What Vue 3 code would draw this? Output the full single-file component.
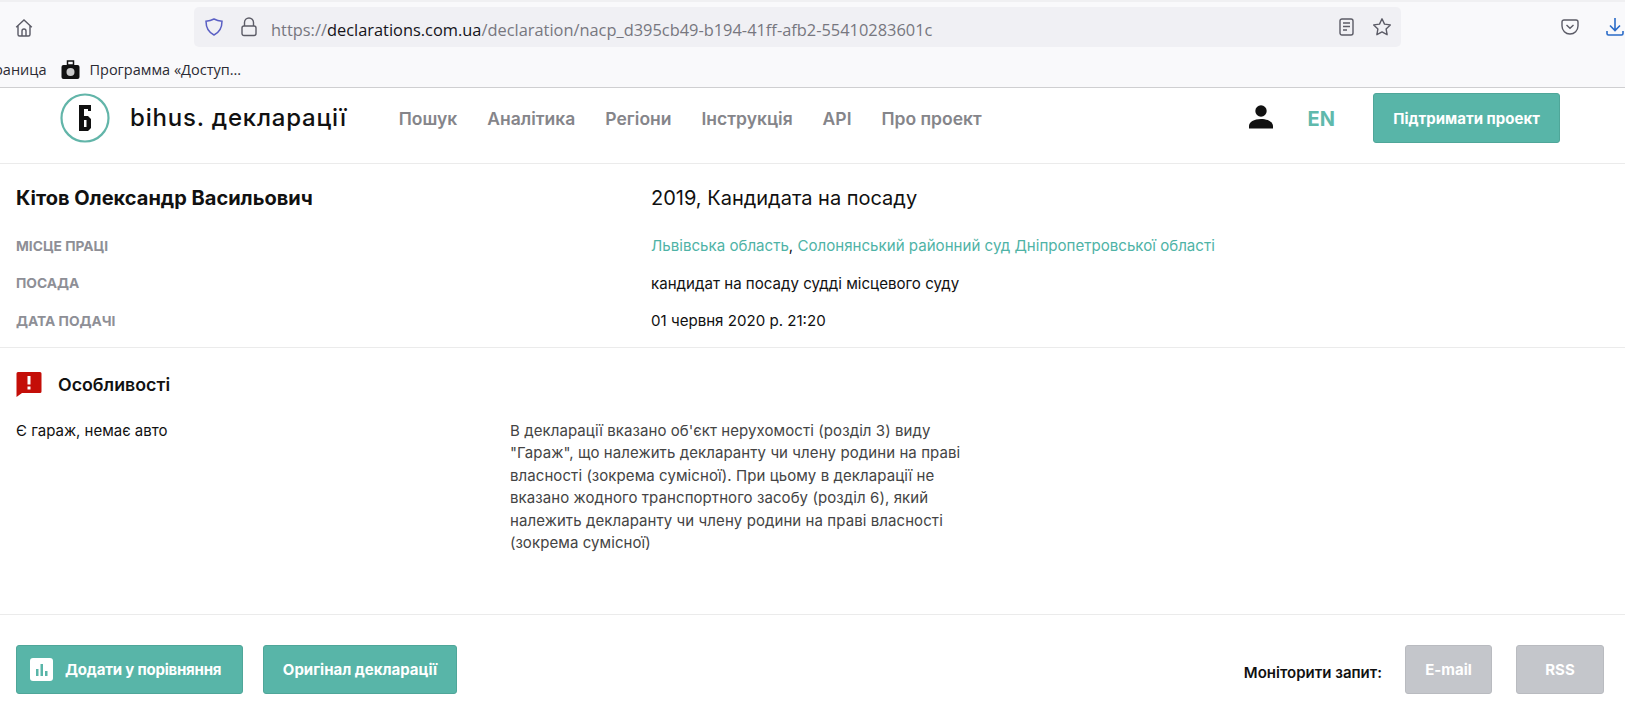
<template>
  <div class="page">
    <div class="browser">
      <div class="toolbar">
        <svg class="home" width="20" height="20" viewBox="0 0 20 20" fill="none" stroke="#5b5b66" stroke-width="1.4">
          <path d="M2.2 9.2 10 2l7.800 7.200M4 7.800V16.500a1.500 1.500 0 0 0 1.500 1.500h9a1.500 1.500 0 0 0 1.500-1.500V7.800" />
          <path d="M8 18v-5a2 2 0 0 1 4 0v5" />
        </svg>
        <div class="urlbar">
          <svg width="20" height="20" viewBox="0 0 20 20" fill="none" stroke="#5a5fc4" stroke-width="1.5">
            <path d="M10 2c2.500 1.300 5 2 8 2.300 0 6.500-2.400 11-8 13.700C4.400 15.300 2 10.800 2 4.300 5 4 7.500 3.300 10 2z" />
          </svg>
          <svg class="lock" width="16" height="20" viewBox="0 0 16 20" fill="none" stroke="#5b5b66" stroke-width="1.400">
            <rect x="1" y="9" width="14" height="9.500" rx="2" />
            <path d="M3.500 9V5.500a4.500 4.500 0 0 1 9 0V9" />
          </svg>
          <div class="url">https://<b>declarations.com.ua</b>/declaration/nacp_d395cb49-b194-41ff-afb2-55410283601c</div>
          <svg class="reader" width="15" height="18" viewBox="0 0 15 18" fill="none" stroke="#5b5b66" stroke-width="1.400">
            <rect x="1" y="1" width="13" height="16" rx="2" />
            <path d="M4 5h7M4 8.500h7M4 12h4" />
          </svg>
          <svg class="star" width="20" height="20" viewBox="0 0 20 20" fill="none" stroke="#5b5b66" stroke-width="1.400" stroke-linejoin="round">
            <path d="M10 1.800l2.500 5.300 5.800.8-4.200 4 1 5.800-5.100-2.800-5.100 2.800 1-5.800-4.200-4 5.800-.8z" />
          </svg>
        </div>
        <svg class="pocket" width="18" height="16" viewBox="0 0 18 16" fill="none" stroke="#5b5b66" stroke-width="1.400">
          <path d="M3 1h12a2 2 0 0 1 2 2v4a8 8 0 0 1-16 0V3a2 2 0 0 1 2-2z" />
          <path d="M5.500 6 9 9.300 12.500 6" />
        </svg>
        <svg class="download" width="18" height="20" viewBox="0 0 18 20" fill="none" stroke="#2a6bc8" stroke-width="1.600">
          <path d="M9 1v12M4 8.500 9 13.500l5-5M1 14v2.500A1.500 1.500 0 0 0 2.500 18h13a1.500 1.500 0 0 0 1.500-1.500V14" />
        </svg>
      </div>
      <div class="bookmarks">
        <span class="bm-cut">раница</span>
        <svg width="19" height="20" viewBox="0 0 19 20">
          <path d="M6.500 1h6v4h-6z" fill="none" stroke="#111" stroke-width="1.500" />
          <rect x="0.500" y="5" width="18" height="14" rx="2" fill="#111" />
          <circle cx="9.500" cy="12" r="4" fill="#c9c9c9" />
        </svg>
        <span>Программа «Доступ...</span>
      </div>
    </div>

    <header class="site-header">
      <div class="logo">
        <svg width="50" height="50" viewBox="0 0 50 50">
          <circle cx="25" cy="25" r="23.500" fill="#fff" stroke="#62b5a9" stroke-width="2.200" />
          <path fill-rule="evenodd" d="M19 12h12v6h-3v-2h-4v7h4l3 3v9l-3 3H19zM24 27v7h2.500v-7z" fill="#111" />
        </svg>
        <span class="logo-text">bihus. декларації</span>
      </div>
      <nav class="nav">
        <a v-for="item in nav" :key="item">{{ item }}</a>
      </nav>
      <svg class="user" width="24" height="24" viewBox="0 0 24 24" fill="#111">
        <circle cx="12" cy="6" r="5.700" />
        <path d="M0 23.500v-2.500c0-4 5-7 12-7s12 3 12 7v2.500z" />
      </svg>
      <span class="lang">EN</span>
      <button class="btn btn-support">Підтримати проект</button>
    </header>

    <section class="info">
      <h1>Кітов Олександр Васильович</h1>
      <div class="info-title">2019, Кандидата на посаду</div>
      <div class="label">МІСЦЕ ПРАЦІ</div>
      <div class="value"><a>Львівська область</a>, <a>Солонянський районний суд Дніпропетровської області</a></div>
      <div class="label">ПОСАДА</div>
      <div class="value">кандидат на посаду судді місцевого суду</div>
      <div class="label">ДАТА ПОДАЧІ</div>
      <div class="value">01 червня 2020 р. 21:20</div>
    </section>

    <section class="features">
      <div class="features-head">
        <svg width="26" height="26" viewBox="0 0 26 26">
          <path d="M2 1h22a1.500 1.500 0 0 1 1.500 1.500v18a1.500 1.500 0 0 1-1.500 1.500H6l-5.500 4V2.500A1.500 1.500 0 0 1 2 1z" fill="#c40e08" />
          <path d="M11.500 5h3v8.500h-3zM11.500 15.500h3v3h-3z" fill="#fff" />
        </svg>
        <h2>Особливості</h2>
      </div>
      <div class="feature-row">
        <div class="feature-name">Є гараж, немає авто</div>
        <p>В декларації вказано об'єкт нерухомості (розділ 3) виду "Гараж", що належить декларанту чи члену родини на праві власності (зокрема сумісної). При цьому в декларації не вказано жодного транспортного засобу (розділ 6), який належить декларанту чи члену родини на праві власності (зокрема сумісної)</p>
      </div>
    </section>

    <footer class="actions">
      <button class="btn btn-compare">
        <svg width="23" height="23" viewBox="0 0 23 23">
          <rect width="23" height="23" rx="3" fill="#fff" />
          <path d="M6 11h2.500v7H6zM10.500 6H13v12h-2.500zM15 13h2.500v5H15z" fill="#58b5a8" />
        </svg>
        Додати у порівняння
      </button>
      <button class="btn btn-original">Оригінал декларації</button>
      <span class="monitor">Моніторити запит:</span>
      <button class="btn btn-off btn-email">E-mail</button>
      <button class="btn btn-off btn-rss">RSS</button>
    </footer>
  </div>
</template>

<script setup>
const nav = ['Пошук', 'Аналітика', 'Регіони', 'Інструкція', 'API', 'Про проект']
</script>

<style>
html, body {
  background: #fff;
  overflow: hidden;
}
</style>

<style scoped>
.page {
  width: 1625px;
  height: 720px;
  overflow: hidden;
  font-family: Inter, "Liberation Sans", sans-serif;
  color: #111;
}

.browser {
  height: 88px;
  box-sizing: border-box;
  background: #f9f9fb;
  border-top: 2px solid #f0f0f2;
  border-bottom: 1px solid #cfcfd1;
}
.toolbar {
  height: 45px;
  padding-top: 5px;
  box-sizing: border-box;
  display: flex;
  align-items: flex-start;
}
.home {
  margin: 11px 0 0 14px;
}
.urlbar {
  width: 1207px;
  height: 40px;
  margin-left: 160px;
  border-radius: 5px;
  background: #f0f0f4;
  display: flex;
  align-items: center;
  padding-left: 10px;
  box-sizing: border-box;
}
.lock {
  margin-left: 17px;
}
.url {
  margin-left: 14px;
  flex: 1;
  font-family: "Open Sans", sans-serif;
  font-size: 16.400px;
  color: #77777f;
  white-space: nowrap;
  position: relative;
  top: 2px;
}
.url b {
  font-weight: 400;
  color: #15141a;
}
.reader {
  margin-right: 18px;
}
.star {
  margin-right: 9px;
}
.pocket {
  margin: 12px 0 0 160px;
}
.download {
  margin: 10px 0 0 27px;
}
.bookmarks {
  height: 40px;
  padding-top: 5px;
  box-sizing: border-box;
  display: flex;
  align-items: center;
  font-family: "Open Sans", sans-serif;
  font-size: 14.500px;
  color: #2b2a33;
}
.bm-cut {
  margin-left: -6px;
  margin-right: 15px;
}
.bookmarks svg {
  margin-right: 9px;
}

.site-header {
  height: 76px;
  box-sizing: border-box;
  border-bottom: 1px solid #ebebeb;
  display: flex;
  align-items: flex-start;
  padding-left: 60px;
}
.logo {
  display: flex;
  align-items: center;
  height: 50px;
  margin-top: 5px;
}
.logo-text {
  margin-left: 20px;
  font-size: 24px;
  font-weight: 500;
  letter-spacing: 0.800px;
  margin-top: -1px;
}
.nav {
  display: flex;
  gap: 30px;
  margin-left: 52px;
  margin-top: 19px;
  font-size: 17.500px;
  font-weight: 600;
  line-height: 24px;
  color: #85858a;
}
.user {
  margin: 17px 0 0 auto;
}
.lang {
  margin: 19px 38px 0 35px;
  font-size: 20px;
  font-weight: 700;
  line-height: 24px;
  color: #5fb9ac;
}
.btn {
  border: 1px solid #4fa699;
  border-radius: 3px;
  background: #58b5a8;
  color: #fff;
  font-family: inherit;
  font-size: 15px;
  font-weight: 700;
  padding: 0;
}
.btn-support {
  width: 187px;
  height: 50px;
  margin: 5px 65px 0 0;
}

.info {
  height: 184px;
  box-sizing: border-box;
  border-bottom: 1px solid #ebebeb;
  padding: 20px 16px 0;
  display: grid;
  grid-template-columns: 635px 1fr;
  grid-template-rows: 28px repeat(3, 37.500px);
  align-items: center;
}
h1 {
  margin: 0;
  font-size: 20px;
  font-weight: 700;
  line-height: 28px;
}
.info-title {
  font-size: 20px;
  line-height: 28px;
}
.label {
  font-size: 13.800px;
  font-weight: 700;
  color: #8e8f96;
  position: relative;
  top: 15px;
}
.value {
  font-size: 15.100px;
  position: relative;
  top: 15px;
}
.value a {
  color: #4fb3a6;
}

.features {
  height: 267px;
  box-sizing: border-box;
  border-bottom: 1px solid #ebebeb;
  padding: 23px 16px 0;
}
.features-head {
  display: flex;
  align-items: center;
  height: 26px;
  gap: 16px;
}
h2 {
  margin: 0;
  font-size: 17.800px;
  font-weight: 600;
}
.feature-row {
  display: grid;
  grid-template-columns: 494px 470px;
  margin-top: 23px;
  font-size: 15px;
  line-height: 22.400px;
}
.feature-row p {
  margin: 0;
  color: #444;
  letter-spacing: 0.080px;
}

.actions {
  display: flex;
  align-items: center;
  padding: 30px 21px 0 16px;
}
.actions .btn {
  height: 49px;
}
.btn-compare {
  width: 227px;
  display: flex;
  align-items: center;
  gap: 12px;
  padding-left: 13px;
  margin-right: 20px;
  letter-spacing: -0.200px;
}
.btn-original {
  width: 194px;
}
.monitor {
  margin-left: auto;
  margin-right: 23px;
  font-size: 15px;
  font-weight: 600;
  position: relative;
  top: 3px;
}
.btn-off {
  background: #c4c6cb;
  border-color: #b9bbc0;
}
.btn-email {
  width: 87px;
  margin-right: 24px;
}
.btn-rss {
  width: 88px;
}
</style>
